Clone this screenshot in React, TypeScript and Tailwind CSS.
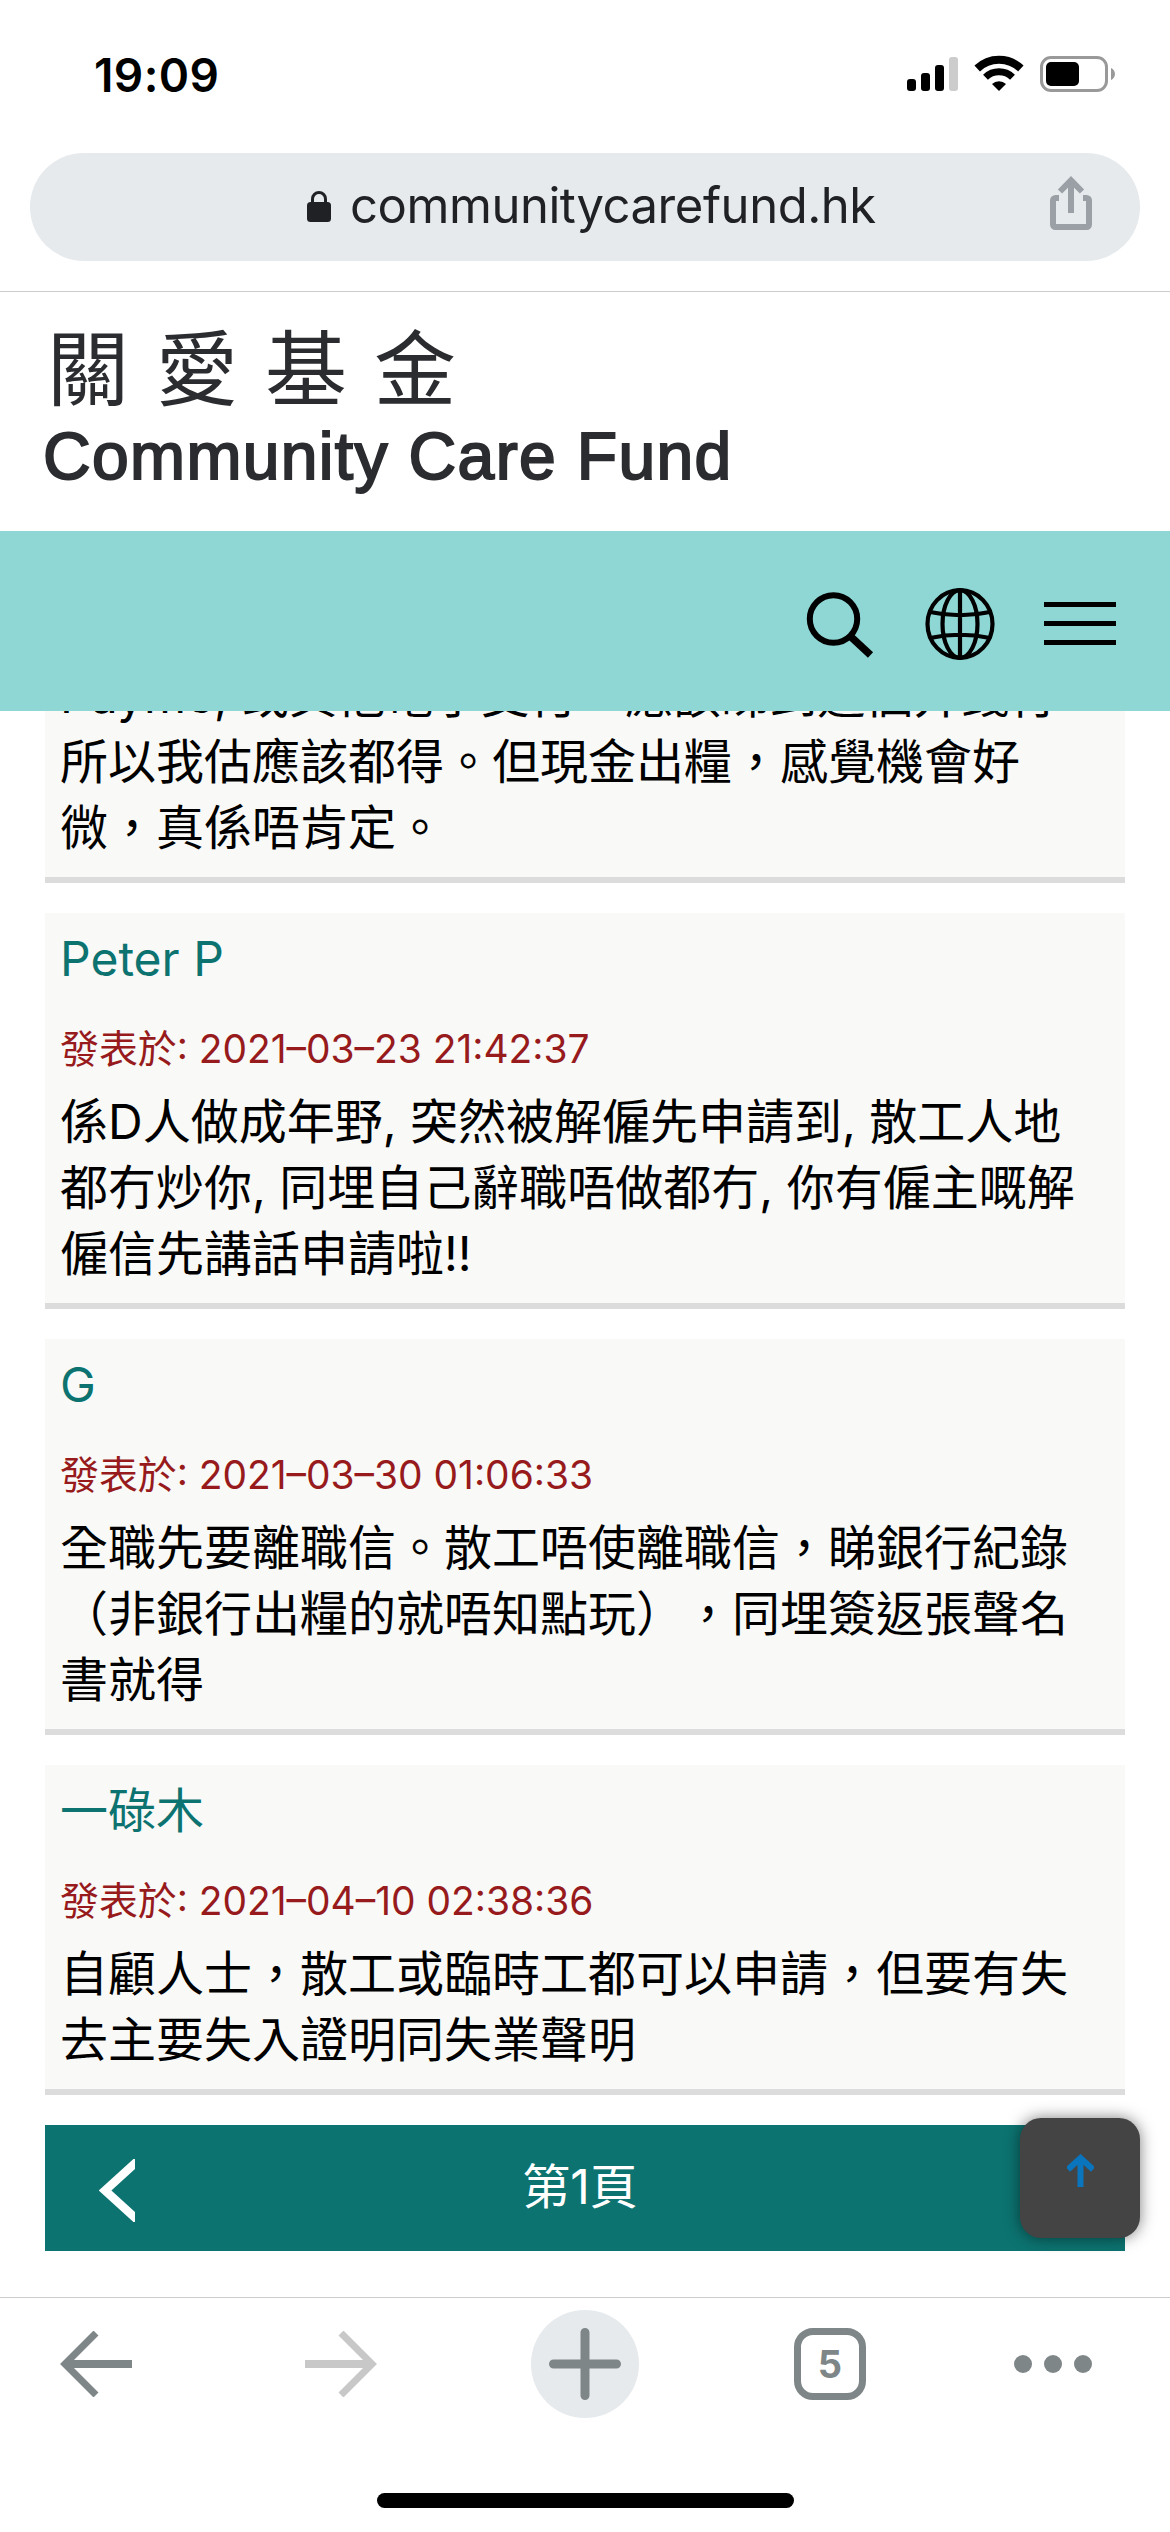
const LATIN = "font-['Inter','Noto_Sans_CJK_TC',sans-serif]";

interface Comment {
  name: string;
  date: string;
  lines: string[];
}

const COMMENTS: Comment[] = [
  {
    name: "Peter P",
    date: "2021–03–23 21:42:37",
    lines: [
      "係D人做成年野, 突然被解僱先申請到, 散工人地",
      "都冇炒你, 同埋自己辭職唔做都冇, 你有僱主嘅解",
      "僱信先講話申請啦!!",
    ],
  },
  {
    name: "G",
    date: "2021–03–30 01:06:33",
    lines: [
      "全職先要離職信。散工唔使離職信，睇銀行紀錄",
      "（非銀行出糧的就唔知點玩），同埋簽返張聲名",
      "書就得",
    ],
  },
  {
    name: "一碌木",
    date: "2021–04–10 02:38:36",
    lines: [
      "自顧人士，散工或臨時工都可以申請，但要有失",
      "去主要失入證明同失業聲明",
    ],
  },
];

function StatusBar() {
  return (
    <div className="flex h-[153px] shrink-0 items-start justify-between pl-[94px] pr-[55px] pt-[51px]">
      <span className="text-[46px] font-semibold leading-[48px] tracking-[0.4px] text-black">19:09</span>
      <svg className="mt-[4px] h-[38px] w-[210px]" viewBox="0 0 210 38" fill="none">
        <rect x="2" y="24" width="9" height="12" rx="3" fill="#000" />
        <rect x="16" y="18" width="9" height="18" rx="3" fill="#000" />
        <rect x="30" y="10" width="9" height="26" rx="3" fill="#000" />
        <rect x="44" y="2" width="9" height="34" rx="3" fill="#ccc" />
        <path d="M72.200 13.500a31.500 31.500 0 0 1 43.600 0" stroke="#000" strokeWidth="8" />
        <path d="M80.500 22.200a19.500 19.500 0 0 1 27 0" stroke="#000" strokeWidth="7" />
        <path d="M87 29a10.300 10.300 0 0 1 14 0L94 36z" fill="#000" />
        <rect x="136.500" y="2.500" width="65" height="33" rx="9.500" stroke="#999" strokeWidth="3" />
        <rect x="141" y="7" width="33" height="24" rx="5" fill="#000" />
        <path d="M206 13v12c2.500-1 4-3.500 4-6s-1.500-5-4-6z" fill="#999" />
      </svg>
    </div>
  );
}

function AddressBar() {
  return (
    <div className="h-[139px] shrink-0 border-b border-[#ccc] px-[30px]">
      <div className="flex h-[108px] items-center justify-between rounded-full bg-[#e6eaed] pl-[276px] pr-[47px]">
        <div className="flex items-center">
          <svg className="h-[32px] w-[26px]" viewBox="0 0 26 32">
            <rect x="1" y="11" width="24" height="20" rx="3.500" fill="#202125" />
            <path d="M6.500 12V8a6.500 6.500 0 0 1 13 0v4" fill="none" stroke="#202125" strokeWidth="3" />
          </svg>
          <span className="-mt-[3px] ml-[18px] text-[49px] leading-[60px] tracking-[-0.45px] text-[#202125]">
            communitycarefund.hk
          </span>
        </div>
        <svg className="-mt-[8px] h-[56px] w-[44px]" viewBox="0 0 44 56" fill="none" stroke="#9aa0a6" strokeWidth="6">
          <path d="M10 23H6.500a2.500 2.500 0 0 0-2.500 2.500V49.500a2.500 2.500 0 0 0 2.500 2.500h31a2.500 2.500 0 0 0 2.500-2.500V25.500a2.500 2.500 0 0 0-2.500-2.500H34" />
          <path d="M22 38V6M11 16.500L22 5.300l11 11.200" />
        </svg>
      </div>
    </div>
  );
}

function SiteHeader() {
  return (
    <header className="shrink-0">
      <div className="flex h-[239px] flex-col items-start pl-[43px] text-[#2b2c30]">
        <span className="mt-[22px] pl-[4px] font-['Noto_Sans_CJK_TC',sans-serif] text-[82px] font-normal leading-[100px] tracking-[27px]">
          關愛基金
        </span>
        <span className="mt-[7px] whitespace-nowrap font-['Liberation_Sans',sans-serif] text-[66px] leading-[70px] tracking-[1.35px] [-webkit-text-stroke:2px_#2b2c30]">
          Community Care Fund
        </span>
      </div>
      <div className="flex h-[180px] items-center justify-end bg-[#8ed7d5] pr-[54px] pt-[5px]">
        <svg className="mt-[2px] h-[68px] w-[70px]" viewBox="0 0 70 68" fill="none" stroke="#000">
          <circle cx="27.500" cy="28" r="23.700" strokeWidth="6" />
          <path d="M43 44l21.500 20" strokeWidth="7.500" />
        </svg>
        <svg className="ml-[49px] h-[72px] w-[70px]" viewBox="0 0 70 72" fill="none" stroke="#000" strokeWidth="4.200">
          <ellipse cx="35" cy="36" rx="32.500" ry="33.800" />
          <ellipse cx="35" cy="36" rx="17.500" ry="33.800" />
          <path d="M35 2v68M5 24q30 6.500 60 0M5 50q30-6.500 60 0" />
        </svg>
        <div className="-mt-[1px] ml-[49px] flex w-[72px] flex-col gap-[14px]">
          <div className="h-[5px] bg-black" />
          <div className="h-[5px] bg-black" />
          <div className="h-[5px] bg-black" />
        </div>
      </div>
    </header>
  );
}

function CommentLines({ lines }: { lines: string[] }) {
  return (
    <>
      {lines.map((line) => (
        <p
          key={line}
          className="whitespace-nowrap text-[48px] leading-[66px] text-black [text-spacing-trim:space-all]"
        >
          {line}
        </p>
      ))}
    </>
  );
}

function CommentCard({ comment }: { comment: Comment }) {
  return (
    <article className="border-b-[6px] border-[#dcdcdc] bg-[#f9f9f7] px-[15px] pb-[16px] pt-[13px]">
      <h3 className="text-[48px] leading-[66px] text-[#0c7370]">{comment.name}</h3>
      <p className="mb-[10px] mt-[27px] whitespace-nowrap text-[38.9px] leading-[60px] text-[#971a1c]">
        發表於: {comment.date}
      </p>
      <CommentLines lines={comment.lines} />
    </article>
  );
}

function Pager() {
  return (
    <div className="relative flex h-[126px] items-center justify-center bg-[#0c7370] text-[48px] text-white">
      <svg className="absolute left-[54px] top-[34px] h-[63px] w-[36px]" viewBox="0 0 36 63" fill="none">
        <path d="M38 2.500L6 31.500l32 29" stroke="#fff" strokeWidth="8.500" />
      </svg>
      <span className="-mt-[2px] mr-[10px]">第1頁</span>
      <button className="absolute -right-[15px] -top-[7px] flex h-[120px] w-[120px] items-center justify-center rounded-[21px] bg-[#444] shadow-[0_0_15px_rgba(0,0,0,0.5)]">
        <svg className="-mt-[15px] h-[33px] w-[27px]" viewBox="0 0 27 33" fill="none" stroke="#0a74bd" strokeWidth="6">
          <path d="M13.500 33V4M1 15.500L13.500 4 26 15.500" />
        </svg>
      </button>
    </div>
  );
}

function BottomToolbar() {
  return (
    <nav className="flex h-[235px] shrink-0 flex-col items-center border-t border-[#ccc] bg-white">
      <div className="mt-[12px] flex h-[108px] w-full items-center pl-[60px]">
        <svg className="-mt-[1px] h-[66px] w-[72px]" viewBox="0 0 72 66" fill="none" stroke="#7f8688">
          <path d="M72 33H6" strokeWidth="8" />
          <path d="M36 2L5 33l31 31" strokeWidth="7" />
        </svg>
        <svg className="-mt-[1px] ml-[173px] h-[66px] w-[72px]" viewBox="0 0 72 66" fill="none" stroke="#c8c8c8">
          <path d="M0 33h66" strokeWidth="8" />
          <path d="M36 2l31 31-31 31" strokeWidth="7" />
        </svg>
        <div className="ml-[154px] flex h-[108px] w-[108px] items-center justify-center rounded-full bg-[#e6eaed]">
          <svg className="h-[72px] w-[72px]" viewBox="0 0 72 72" stroke="#7f8688" strokeWidth="9" strokeLinecap="round">
            <path d="M36 4.500v63M4.500 36h63" />
          </svg>
        </div>
        <div className="ml-[155px] flex h-[72px] w-[72px] items-center justify-center rounded-[19px] border-[7px] border-[#7f8688] text-[38px] font-bold text-[#7f8688]">
          5
        </div>
        <div className="ml-[148px] flex gap-[12px]">
          <span className="h-[18px] w-[18px] rounded-full bg-[#7f8688]" />
          <span className="h-[18px] w-[18px] rounded-full bg-[#7f8688]" />
          <span className="h-[18px] w-[18px] rounded-full bg-[#7f8688]" />
        </div>
      </div>
      <div className="mt-[75px] h-[15px] w-[417px] rounded-full bg-black" />
    </nav>
  );
}

export default function App() {
  return (
    <div className={`flex h-[2532px] w-[1170px] flex-col overflow-hidden bg-white ${LATIN}`}>
      <StatusBar />
      <AddressBar />
      <SiteHeader />
      <main className="flex h-[1586px] shrink-0 flex-col px-[45px]">
        {/* the first comment is scrolled halfway under the header */}
        <article className="flex h-[172px] flex-col justify-end overflow-hidden border-b-[6px] border-[#dcdcdc] bg-[#f9f9f7] px-[15px] pb-[16px]">
          <CommentLines
            lines={[
              "Payme, 或其他電子支付，應該睇到過個并錢行",
              "所以我估應該都得。但現金出糧，感覺機會好",
              "微，真係唔肯定。",
            ]}
          />
        </article>
        <div className="mt-[30px] flex flex-col gap-[30px]">
          {COMMENTS.map((comment) => (
            <CommentCard key={comment.date} comment={comment} />
          ))}
          <Pager />
        </div>
      </main>
      <BottomToolbar />
    </div>
  );
}
